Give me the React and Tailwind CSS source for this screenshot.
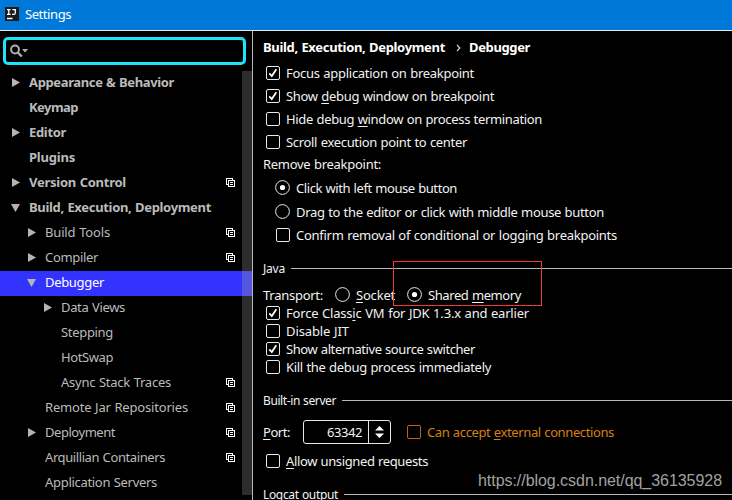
import { useLayoutEffect, useRef } from 'react';
import clsx from 'clsx';

// Text run whose tracking is adjusted so that it spans exactly `w` pixels.
function T({ w, children, className }) {
  const ref = useRef(null);
  useLayoutEffect(() => {
    const el = ref.current;
    el.style.letterSpacing = '0px';
    const natural = el.getBoundingClientRect().width;
    el.style.letterSpacing = `${(w - natural) / el.textContent.length}px`;
  }, [w]);
  return (
    <span ref={ref} className={clsx('shrink-0 whitespace-pre', className)}>
      {children}
    </span>
  );
}

function U({ children }) {
  return <span className="underline decoration-1 underline-offset-2">{children}</span>;
}

function Arrow({ open }) {
  return (
    <svg width="10" height="10" viewBox="0 0 10 10" className="shrink-0" fill="#b4b4b4">
      {open ? <path d="M0 2h9L4.5 10z" /> : <path d="M1 1v9L9 5.5z" />}
    </svg>
  );
}

function CopyIcon() {
  return (
    <svg width="10" height="10" viewBox="0 0 10 10" fill="none" stroke="#fff" shapeRendering="crispEdges" className="mt-[2px]">
      <path d="M2.5 6.5h-2v-6h6v2M2.5 2.5h6v6h-6zM4 4.5h3M4 6.5h3" />
    </svg>
  );
}

const tree = [
  { label: 'Appearance & Behavior', w: 145, level: 0, arrow: 'closed' },
  { label: 'Keymap', w: 49, level: 0 },
  { label: 'Editor', w: 37, level: 0, arrow: 'closed' },
  { label: 'Plugins', w: 46, level: 0 },
  { label: 'Version Control', w: 97, level: 0, arrow: 'closed', copy: true },
  { label: 'Build, Execution, Deployment', w: 182, level: 0, arrow: 'open' },
  { label: 'Build Tools', w: 65, level: 1, arrow: 'closed', copy: true },
  { label: 'Compiler', w: 53, level: 1, arrow: 'closed', copy: true },
  { label: 'Debugger', w: 59, level: 1, arrow: 'open', selected: true },
  { label: 'Data Views', w: 64, level: 2, arrow: 'closed' },
  { label: 'Stepping', w: 52, level: 2 },
  { label: 'HotSwap', w: 52, level: 2 },
  { label: 'Async Stack Traces', w: 110, level: 2, copy: true },
  { label: 'Remote Jar Repositories', w: 143, level: 1, copy: true },
  { label: 'Deployment', w: 70, level: 1, arrow: 'closed', copy: true },
  { label: 'Arquillian Containers', w: 120, level: 1, copy: true },
  { label: 'Application Servers', w: 112, level: 1 },
];

const indent = ['pl-[11px]', 'pl-[27px]', 'pl-[43px]'];

function TreeRow({ item }) {
  return (
    <div
      className={clsx(
        'flex h-[25px] shrink-0 items-center pb-[3px]',
        indent[item.level],
        item.level === 0 && 'font-bold',
        item.selected ? 'bg-[#3333ff] text-white' : 'text-[#bbbbbb]',
      )}
    >
      <span className="flex w-[18px] shrink-0">{item.arrow && <Arrow open={item.arrow === 'open'} />}</span>
      <T w={item.w}>{item.label}</T>
      <span className={clsx('ml-auto flex shrink-0 items-center', item.selected ? '-mb-[3px] h-[25px] w-[10px] bg-[#5555e0]' : 'h-full w-[26px]')}>
        {item.copy && <CopyIcon />}
      </span>
    </div>
  );
}

function Box({ checked, className }) {
  return (
    <span
      className={clsx(
        'flex size-[14px] shrink-0 items-center justify-center rounded-[2px] border',
        className || 'border-[#e8e8e8]',
      )}
    >
      {checked && (
        <svg width="10" height="10" viewBox="0 0 10 10" fill="none" stroke="#fff" strokeWidth="1.8" className="shrink-0">
          <path d="M1.3 5.3L3.8 8L8.3 1.3" />
        </svg>
      )}
    </span>
  );
}

function Radio({ checked }) {
  return (
    <svg width="15" height="15" viewBox="0 0 15 15" className="shrink-0">
      <circle cx="7.5" cy="7.5" r="6.9" fill="none" stroke="#e8e8e8" />
      {checked && <circle cx="7.5" cy="7.5" r="2.6" fill="#fff" />}
    </svg>
  );
}

function Check({ checked, w, className, children }) {
  return (
    <div className={clsx('flex shrink-0 items-center gap-1.5', className)}>
      <Box checked={checked} />
      <T w={w}>{children}</T>
    </div>
  );
}

function Section({ title, w, className }) {
  return (
    <div className={clsx('flex h-[18px] shrink-0 items-center gap-1.5 text-xs leading-[18px]', className)}>
      <T w={w}>{title}</T>
      <span className="mb-px h-px flex-1 bg-[#b8b8b8]" />
    </div>
  );
}

export default function App() {
  return (
    <div className="relative flex h-[500px] w-[732px] flex-col overflow-hidden bg-black font-['Noto_Sans',sans-serif] text-[13px] leading-[18px] [word-spacing:0.5px] text-[#f2f2f2]">
      <header className="flex h-[31px] shrink-0 items-center gap-[6px] border-b border-[#e6eef5] bg-[#0078d7] pb-[2px] pl-[5px] text-white">
        <svg width="14" height="14" viewBox="0 0 14 14" fill="none" stroke="#fff" strokeWidth="1.3">
          <rect width="14" height="14" fill="#1b1b1b" stroke="none" />
          <path d="M2 2.6h3.6M3.8 2.6v4.8M2 7.4h3.6M7.4 2.6h2.9v3.2q0 1.6-1.5 1.6H7M2 11.5h5.5" />
        </svg>
        <T w={46}>Settings</T>
      </header>

      <div className="flex min-h-0 flex-1">
        <aside className="flex w-[252px] shrink-0 flex-col">
          <div className="mt-[6px] mr-[6px] ml-[3px] flex h-[28px] shrink-0 items-center rounded-[5px] border-[3px] border-[#1be5fb] pl-[4px]">
            <svg width="19" height="14" viewBox="0 0 19 14" fill="none" stroke="#b0b0b0" strokeWidth="2" className="mb-px">
              <circle cx="5" cy="5.5" r="3.9" />
              <path d="M7.8 8.5l4 4" strokeWidth="2.4" />
              <path d="M12 5h6l-3 3.5z" fill="#b0b0b0" stroke="none" />
            </svg>
          </div>
          <nav className="mt-[6px] flex h-[424px] shrink-0 flex-col bg-[linear-gradient(#2d2d2d,#2d2d2d)] bg-[length:10px_100%] bg-right bg-no-repeat">
            {tree.map((item) => (
              <TreeRow key={item.label} item={item} />
            ))}
          </nav>
        </aside>

        <main className="flex min-w-0 flex-1 flex-col overflow-hidden border-l border-[#b8b8b8] pl-[10px]">
          <div className="flex h-[30px] shrink-0 items-center pt-[2px] font-bold text-white">
            <T w={182}>Build, Execution, Deployment</T>
            <svg width="5" height="8" viewBox="0 0 5 8" fill="none" stroke="#ddd" strokeWidth="1.2" className="mt-px mr-[8px] ml-[11px]">
              <path d="M1 0.8L3.8 4L1 7.2" />
            </svg>
            <T w={61}>Debugger</T>
          </div>

          <Check checked w={188} className="h-[23px] pt-px pl-[3px]">Focus application on breakpoint</Check>
          <Check checked w={208} className="h-[23px] pt-px pl-[3px]">Show <U>d</U>ebug window on breakpoint</Check>
          <Check w={256} className="h-[23px] pt-px pl-[3px]">Hide debug <U>w</U>indow on process termination</Check>
          <Check w={181} className="h-[23px] pt-px pl-[3px]">Scroll execution point to center</Check>
          <div className="flex h-[22px] shrink-0 items-center"><T w={118}>Remove breakpoint:</T></div>
          <div className="flex h-[25px] shrink-0 items-center gap-1.5 pl-3">
            <Radio checked />
            <T w={161}>Click with left mouse button</T>
          </div>
          <div className="flex h-[23px] shrink-0 items-center gap-1.5 pl-3">
            <Radio />
            <T w={308}>Drag to the editor or click with middle mouse button</T>
          </div>
          <Check w={321} className="h-6 pl-[13px]">Confirm removal of conditional or logging breakpoints</Check>

          <Section title="Java" w={22} className="mt-[13px]" />
          <div className="mt-[7px] flex h-[19px] shrink-0 items-center">
            <T w={60}>Transport:</T>
            <span className="ml-3 flex items-center gap-1.5"><Radio /><T w={39}><U>S</U>ocket</T></span>
            <span className="ml-3 flex items-center gap-1.5"><Radio checked /><T w={93}>Shared <U>m</U>emory</T></span>
          </div>
          <Check checked w={243} className="h-[18px] pl-[3px]">Force Class<U>i</U>c VM for JDK 1.3.x and earlier</Check>
          <Check w={63} className="h-[18px] pl-[3px]">Disable JIT</Check>
          <Check checked w={189} className="h-[18px] pl-[3px]">Show alternative source switcher</Check>
          <Check w={205} className="h-[18px] pl-[3px]">Kill the debug process immediately</Check>

          <Section title="Built-in server" w={73} className="mt-4" />
          <div className="mt-[10px] flex h-6 shrink-0 items-center">
            <T w={27}><U>P</U>ort:</T>
            <div className="ml-[13px] flex h-6 w-[88px] rounded-[3px] border border-[#e8e8e8]">
              <span className="flex flex-1 items-center justify-end pr-[6px]"><T w={35}>63342</T></span>
              <span className="flex w-[22px] items-center justify-center border-l border-[#e8e8e8]">
                <svg width="9" height="12" viewBox="0 0 9 12" fill="#fff"><path d="M0 4.5L4.5 0L9 4.5zM0 7.5h9L4.5 12z" /></svg>
              </span>
            </div>
            <span className="ml-4 flex items-center gap-1.5 text-[#d5810f]">
              <Box className="border-[#b5671a]" />
              <T w={187}>Can accept <U>e</U>xternal connections</T>
            </span>
          </div>
          <Check w={142} className="mt-2 h-[18px] pl-[3px]"><U>A</U>llow unsigned requests</Check>
          <Section title="Logcat output" w={75} className="mt-4" />
        </main>
      </div>

      <div className="absolute top-[261px] left-[393px] h-[45px] w-[149px] border border-[#f03a3a]" />
      <div className="absolute top-[471px] left-[478px] flex font-['Liberation_Sans',sans-serif] text-base leading-5 text-[#a2a2a2]">
        <T w={244}>https://blog.csdn.net/qq_36135928</T>
      </div>
    </div>
  );
}
